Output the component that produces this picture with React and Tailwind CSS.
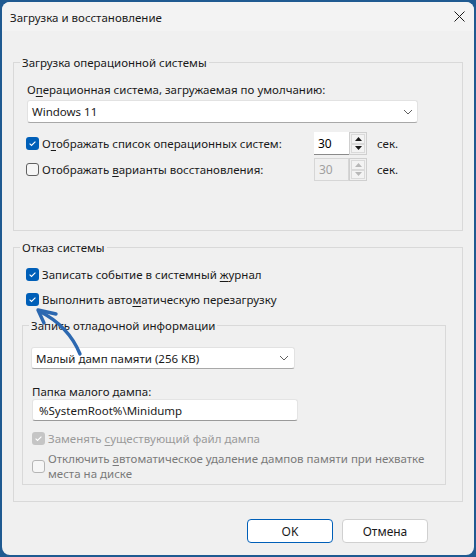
import React from 'react';

const Check = ({ checked, disabled }) => {
  if (checked) {
    return (
      <span
        className={`flex h-[13px] w-[13px] shrink-0 items-center justify-center rounded-[3px] ${
          disabled ? 'bg-[#c5c5c5]' : 'bg-[#005fb8]'
        }`}
      >
        <svg width="13" height="13" viewBox="0 0 13 13">
          <path d="M3.6 6.7 L5.5 8.5 L9.4 4.6" fill="none" stroke="#fff" strokeWidth="1.1" />
        </svg>
      </span>
    );
  }
  return (
    <span
      className={`h-[13px] w-[13px] shrink-0 rounded-[3px] border bg-[#f6f6f6] ${
        disabled ? 'border-[#b5b5b5]' : 'border-[#616161]'
      }`}
    />
  );
};

const Key = ({ children }) => <span className="underline underline-offset-[2px]">{children}</span>;

const Chevron = () => (
  <svg width="10" height="6" viewBox="0 0 10 6">
    <path d="M1 1 L5 5 L9 1" fill="none" stroke="#606060" strokeWidth="1" />
  </svg>
);

const Spin = ({ disabled }) => (
  <div className="flex h-[23px] w-[53px]">
    <div
      className={`flex w-[35px] items-center pl-[4px] text-[12px] ${
        disabled
          ? 'border border-[#d6d6d6] text-[#a0a0a0]'
          : 'border-b border-[#8a8a8a] bg-white text-black'
      }`}
    >
      30
    </div>
    <div className="flex w-[18px] flex-col border border-[#cfcfcf] p-[1px]">
      {[0, 1].map((i) => (
        <div
          key={i}
          className="flex flex-1 items-center justify-center border border-[#dadada] bg-[#f3f3f3]"
        >
          <svg width="7" height="4" viewBox="0 0 7 4">
            <path
              d={i === 0 ? 'M0 4 L3.5 0 L7 4 Z' : 'M0 0 L3.5 4 L7 0 Z'}
              fill={disabled ? '#b8b8b8' : '#1a1a1a'}
            />
          </svg>
        </div>
      ))}
    </div>
  </div>
);

export default function App() {
  return (
    <div
      className="relative h-[557px] w-[476px] bg-[#1f5a91] p-[2px] text-[11.5px] leading-[15px] text-[#1a1a1a]"
      style={{ fontFamily: '"Noto Sans", sans-serif' }}
    >
      <div className="flex h-full flex-col overflow-hidden rounded-[8px] bg-[#f0f0f0]">
        {/* Title */}
        <div className="flex h-[29px] shrink-0 items-center justify-between bg-[#f3f3f3] pl-[8px] pr-[9px]">
          <span className="pt-[1px]">Загрузка и восстановление</span>
          <svg width="11" height="11" viewBox="0 0 11 11">
            <path d="M0.5 0.5 L10.5 10.5 M10.5 0.5 L0.5 10.5" stroke="#1a1a1a" strokeWidth="1" />
          </svg>
        </div>

        <div className="flex flex-col px-[11px] pt-[24px]">
          {/* Boot */}
          <fieldset className="h-[176px] border border-[#d9d9d9]">
            <legend className="ml-[6px] px-[2px]">Загрузка операционной системы</legend>
            <div className="flex flex-col pl-[13px]">
              <div className="mt-[12px]">
                О<Key>п</Key>ерационная система, загружаемая по умолчанию:
              </div>
              <div className="mt-[3px] flex h-[23px] w-[391px] items-center justify-between rounded-[3px] border border-[#e2e2e2] border-b-[#a8a8a8] bg-white pl-[4px] pr-[4px]">
                <span>Windows 11</span>
                <Chevron />
              </div>
              <div className="mt-[9px] flex items-center">
                <div className="flex w-[288px] items-center gap-[3px] -ml-[1px]">
                  <Check checked />
                  <span>
                    О<Key>т</Key>ображать список операционных систем:
                  </span>
                </div>
                <Spin />
                <span className="ml-[10px]">сек.</span>
              </div>
              <div className="mt-[3px] flex items-center">
                <div className="flex w-[288px] items-center gap-[3px] -ml-[1px]">
                  <Check />
                  <span>
                    Отображать <Key>в</Key>арианты восстановления:
                  </span>
                </div>
                <Spin disabled />
                <span className="ml-[10px]">сек.</span>
              </div>
            </div>
          </fieldset>

          {/* Failure */}
          <fieldset className="mt-[9px] h-[262px] border border-[#d9d9d9]">
            <legend className="ml-[6px] px-[2px]">Отказ системы</legend>
            <div className="flex flex-col pl-[8px]">
              <div className="mt-[11px] flex h-[16px] items-center gap-[3px] pl-[4px]">
                <Check checked />
                <span>
                  Записать событие в системный <Key>ж</Key>урнал
                </span>
              </div>
              <div className="mt-[9px] flex h-[16px] items-center gap-[3px] pl-[4px]">
                <Check checked />
                <span>
                  Выполнить авто<Key>м</Key>атическую перезагрузку
                </span>
              </div>

              <fieldset className="mt-[11px] h-[167px] w-[424px] border border-[#d9d9d9]">
                <legend className="ml-[6px] px-[2px]">Запись отладочной информации</legend>
                <div className="flex flex-col pl-[8px]">
                  <div className="mt-[14px] flex h-[22px] w-[264px] items-center justify-between rounded-[3px] border border-[#e2e2e2] border-b-[#a8a8a8] bg-white pl-[4px] pr-[5px]">
                    <span>Малый дамп памяти (256 KB)</span>
                    <Chevron />
                  </div>
                  <div className="ml-[1px] mt-[15px]">Папка малого дампа:</div>
                  <div className="ml-[1px] flex h-[22px] w-[266px] items-center rounded-[3px] border border-[#e4e4e4] border-b-[#9a9a9a] bg-white pl-[6px]">
                    %SystemRoot%\Minidump
                  </div>
                  <div className="ml-[1px] mt-[9px] flex h-[16px] items-center gap-[3px] text-[#9a9a9a]">
                    <Check checked disabled />
                    <span>
                      Заменять <Key>с</Key>уществующий файл дампа
                    </span>
                  </div>
                  <div className="ml-[1px] mt-[5px] flex items-center gap-[3px] text-[#7a7a7a]">
                    <Check disabled />
                    <div className="flex flex-col">
                      <span>
                        Отключить <Key>а</Key>втоматическое удаление дампов памяти при нехватке
                      </span>
                      <span>места на диске</span>
                    </div>
                  </div>
                </div>
              </fieldset>
            </div>
          </fieldset>

          {/* Buttons */}
          <div className="mt-[17px] flex justify-end gap-[9px] pr-[35px]">
            <button className="h-[24px] w-[86px] rounded-[4px] border border-[#005fb8] bg-white text-[12px]">
              OK
            </button>
            <button className="h-[24px] w-[86px] rounded-[4px] border border-[#d0d0d0] bg-white text-[12px]">
              Отмена
            </button>
          </div>
        </div>
      </div>

      {/* Annotation arrow */}
      <svg className="pointer-events-none absolute left-0 top-0" width="476" height="557" viewBox="0 0 476 557">
        <path
          d="M80 354 C 73 337, 61 322, 39 311"
          fill="none"
          stroke="#2c68b0"
          strokeWidth="3.4"
          strokeLinecap="round"
        />
        <path
          d="M56 314 L38 310 L44 323"
          fill="none"
          stroke="#2c68b0"
          strokeWidth="3.4"
          strokeLinecap="round"
          strokeLinejoin="round"
        />
      </svg>
    </div>
  );
}
